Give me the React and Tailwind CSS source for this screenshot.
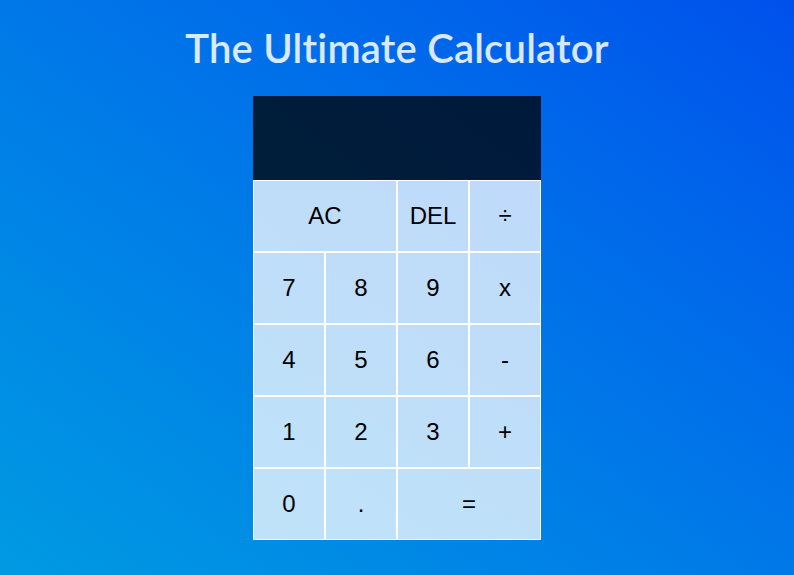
export default function App() {
  const btn =
    "border border-white bg-white/75 flex items-center justify-center text-[24px] text-black cursor-pointer";
  return (
    <div className="min-h-screen w-full bg-gradient-to-tr from-[#009ae2] to-[#0050ec] flex flex-col items-center font-['Liberation_Sans',Arial,sans-serif]">
      <h1 className="mt-[24px] h-[48px] leading-[48px] text-[40px] tracking-[0.2px] font-semibold text-white/85 font-['Lato','Open_Sans',sans-serif]">
        The Ultimate Calculator
      </h1>
      <div className="mt-[24px] grid grid-cols-[repeat(4,72px)] grid-rows-[84px_repeat(5,72px)]">
        <div className="col-span-4 bg-black/75" />
        <button className={`${btn} col-span-2`}>AC</button>
        <button className={btn}>DEL</button>
        <button className={btn}>÷</button>
        <button className={btn}>7</button>
        <button className={btn}>8</button>
        <button className={btn}>9</button>
        <button className={btn}>x</button>
        <button className={btn}>4</button>
        <button className={btn}>5</button>
        <button className={btn}>6</button>
        <button className={btn}>-</button>
        <button className={btn}>1</button>
        <button className={btn}>2</button>
        <button className={btn}>3</button>
        <button className={btn}>+</button>
        <button className={btn}>0</button>
        <button className={btn}>.</button>
        <button className={`${btn} col-span-2`}>=</button>
      </div>
    </div>
  );
}
